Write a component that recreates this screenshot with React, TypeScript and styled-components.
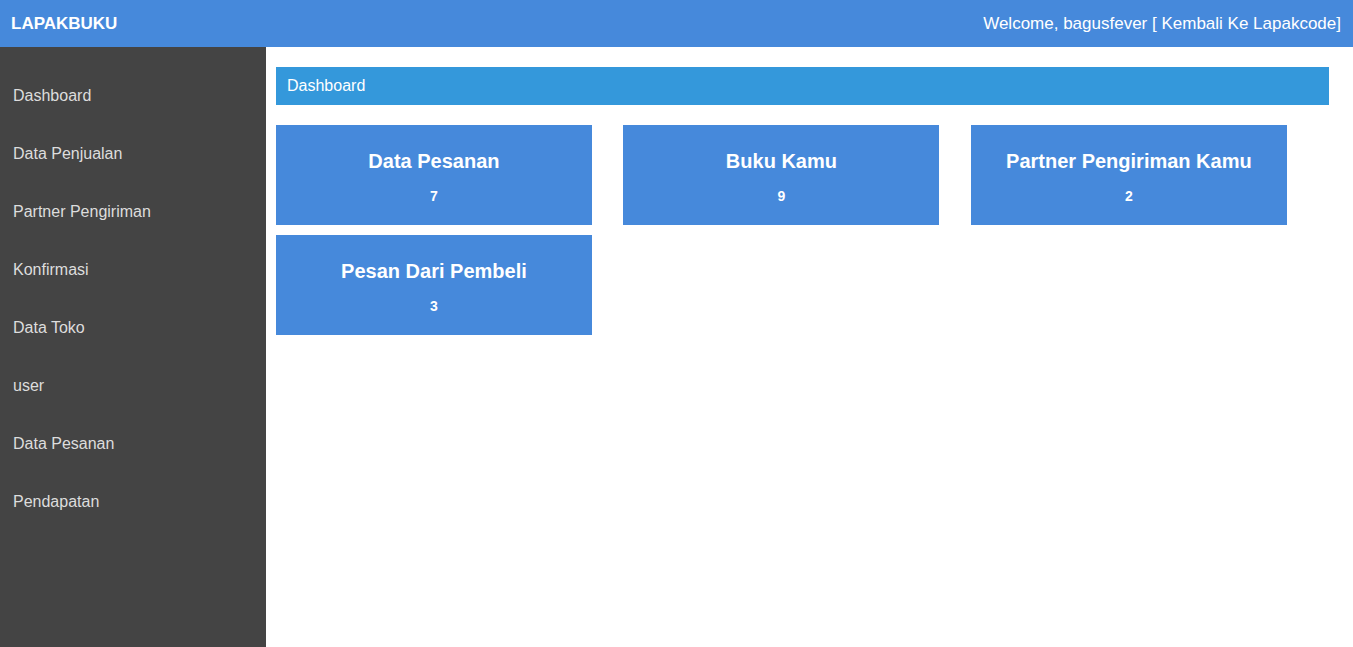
import React from 'react';
import styled, { createGlobalStyle } from 'styled-components';

const GlobalStyle = createGlobalStyle`
  html, body {
    margin: 0;
    padding: 0;
    height: 100%;
    font-family: 'Liberation Sans', Arial, sans-serif;
    background: #ffffff;
  }
  #root {
    height: 100%;
  }
`;

const Page = styled.div`
  display: flex;
  flex-direction: column;
  height: 100vh;
`;

const Header = styled.header`
  height: 47px;
  flex: 0 0 47px;
  background: #4689db;
  color: #ffffff;
  display: flex;
  align-items: center;
  justify-content: space-between;
  padding: 0 12px 0 11px;
  font-size: 17px;
`;

const Brand = styled.div`
  font-weight: bold;
`;

const Welcome = styled.div`
  font-size: 17px;
`;

const Body = styled.div`
  flex: 1;
  display: flex;
  min-height: 0;
`;

const Sidebar = styled.nav`
  width: 266px;
  flex: 0 0 266px;
  background: #444444;
  padding-top: 20px;
  box-sizing: border-box;
`;

const MenuItem = styled.a`
  display: block;
  padding: 20px 13px;
  line-height: 18px;
  font-size: 16px;
  color: #dddddd;
  text-decoration: none;
  cursor: pointer;
`;

const Main = styled.main`
  flex: 1;
  padding: 20px 24px 0 10px;
`;

const Breadcrumb = styled.div`
  height: 38px;
  background: #3498db;
  color: #ffffff;
  font-size: 16px;
  display: flex;
  align-items: center;
  padding: 0 11px;
`;

const Cards = styled.div`
  display: grid;
  grid-template-columns: repeat(3, 30%);
  column-gap: 3%;
  row-gap: 10px;
  margin-top: 20px;
`;

const Card = styled.div`
  height: 100px;
  background: #4689db;
  color: #ffffff;
  text-align: center;
  box-sizing: border-box;
  padding-top: 24px;
`;

const CardTitle = styled.div`
  font-size: 20px;
  font-weight: bold;
  line-height: 24px;
`;

const CardCount = styled.div`
  font-size: 14px;
  font-weight: bold;
  line-height: 16px;
  margin-top: 15px;
`;

const menu = [
  'Dashboard',
  'Data Penjualan',
  'Partner Pengiriman',
  'Konfirmasi',
  'Data Toko',
  'user',
  'Data Pesanan',
  'Pendapatan',
];

const stats = [
  { title: 'Data Pesanan', count: 7 },
  { title: 'Buku Kamu', count: 9 },
  { title: 'Partner Pengiriman Kamu', count: 2 },
  { title: 'Pesan Dari Pembeli', count: 3 },
];

export default function App() {
  return (
    <>
      <GlobalStyle />
      <Page>
        <Header>
          <Brand>LAPAKBUKU</Brand>
          <Welcome>Welcome, bagusfever [ Kembali Ke Lapakcode]</Welcome>
        </Header>
        <Body>
          <Sidebar>
            {menu.map((m) => (
              <MenuItem key={m}>{m}</MenuItem>
            ))}
          </Sidebar>
          <Main>
            <Breadcrumb>Dashboard</Breadcrumb>
            <Cards>
              {stats.map((s) => (
                <Card key={s.title}>
                  <CardTitle>{s.title}</CardTitle>
                  <CardCount>{s.count}</CardCount>
                </Card>
              ))}
            </Cards>
          </Main>
        </Body>
      </Page>
    </>
  );
}
